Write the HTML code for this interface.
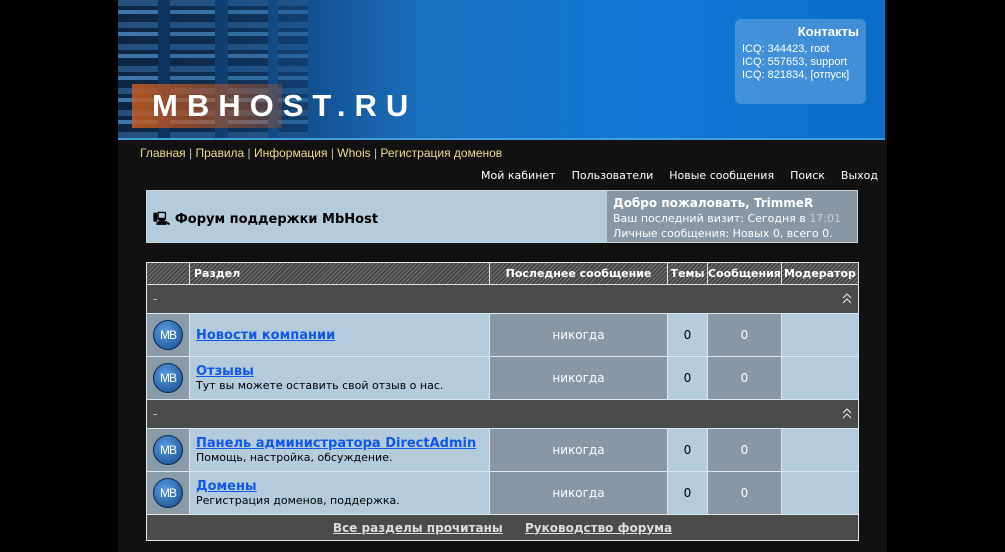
<!DOCTYPE html>
<html><head><meta charset="utf-8"><style>
*{margin:0;padding:0;box-sizing:border-box}
body{width:1005px;height:552px;background:#000;font-family:"DejaVu Sans","Liberation Sans",sans-serif;overflow:hidden;position:relative}
.wrap{position:absolute;left:118px;top:0;width:769px;height:552px;background:#111}
.hdr{position:absolute;left:0;top:0;width:767px;height:140px;background:linear-gradient(90deg,#0b2a50 0%,#14518f 25%,#1a6fc0 40%,#0f7ad6 70%,#0a6dc8 100%);border-bottom:2px solid #3e9ee0;overflow:hidden}
.rack{position:absolute;top:0;height:140px;background:repeating-linear-gradient(180deg,#2a5a8a 0 6px,#0d2540 6px 10px,#4a86bb 10px 14px,#0d2540 14px 22px)}
.logo{position:absolute;left:14px;top:84px;width:150px;height:44px;background:linear-gradient(90deg,rgba(200,90,30,.85),rgba(200,90,30,.3))}
.logotxt{position:absolute;left:34px;top:88px;font-family:"Liberation Sans",sans-serif;font-weight:bold;color:#fff;font-size:31px;letter-spacing:9px}
.cont{position:absolute;left:617px;top:19px;width:131px;height:85px;background:rgba(110,170,225,.55);border-radius:6px;color:#fff;font-family:"Liberation Sans",sans-serif;font-size:11px;padding:6px 7px;line-height:13px}
.cont b{display:block;text-align:right;font-size:13px;margin-bottom:5px}
.nav1{position:absolute;left:22px;top:146px;font-family:"Liberation Sans",sans-serif;font-size:12px;color:#f0d890}
.nav1 span{color:#bbb}
.nav2{position:absolute;right:9px;top:169px;font-family:"DejaVu Sans",sans-serif;font-size:11px;color:#fff}
.nav2 i{font-style:normal;margin-left:16px}
.box{position:absolute;left:28px;top:190px;width:712px;height:53px;border:1px solid #ccd6de;background:#b3cbdb}
.box .t{position:absolute;left:6px;top:19px;font-size:13px;font-weight:bold;color:#000}
.box .r{position:absolute;left:460px;top:0;right:0;bottom:0;background:#8797a4;color:#fff;font-size:11px;padding:5px 6px;line-height:15px}
.box .r b{font-size:12px}
table{position:absolute;left:28px;top:262px;width:713px;border-collapse:collapse;border:1px solid #ccd6de}
td,th{border:1px solid #dde6ec;font-size:12px}
th{height:22px;color:#fff;font-size:11px;background:repeating-linear-gradient(135deg,#777 0 1px,#444 1px 3px);text-align:center}
.cat td{background:#4a4b4b;color:#ccc;height:29px;padding-left:6px;position:relative}
.car{position:absolute;right:6px;top:8px}
.row td{height:43px}
.ic{width:43px;background:#8a9aa6;text-align:center}
.mb{display:inline-block;width:30px;height:30px;border-radius:50%;background:radial-gradient(circle at 40% 35%,#5a9be0,#134a8c);border:1px solid #0a2a55;color:#fff;font-size:12px;line-height:28px;font-family:"Liberation Sans",sans-serif;letter-spacing:-1px}
.nm{background:#b3cbdb;padding-left:6px;color:#000;font-size:11px}
.nm a{color:#1158e6;font-weight:bold;font-size:13px;text-decoration:underline;display:block}
.ls{background:#8797a4;color:#fff;text-align:center;font-size:12px}
.tc{background:#b3cbdb;text-align:center}
.pc{background:#8797a4;color:#fff;text-align:center}
.ft td{background:#4a4b4b;height:26px;text-align:center;color:#ddd;font-weight:bold;font-size:12px}
.ft a{color:#ddd;text-decoration:underline;margin:0 9px}
</style></head><body>
<div class="wrap">
<div class="hdr">
<div class="rack" style="left:0;width:40px;opacity:.8"></div>
<div class="rack" style="left:52px;width:45px;opacity:.7"></div>
<div class="rack" style="left:110px;width:40px;opacity:.6"></div>
<div class="rack" style="left:160px;width:30px;opacity:.4"></div>
<div class="logo"></div>
<div class="logotxt">MBHOST.RU</div>
<div class="cont"><b>Контакты</b>ICQ: 344423, root<br>ICQ: 557653, support<br>ICQ: 821834, [отпуск]</div>
</div>
<div class="nav1">Главная <span>|</span> Правила <span>|</span> Информация <span>|</span> Whois <span>|</span> Регистрация доменов</div>
<div class="nav2">Мой кабинет<i>Пользователи</i><i>Новые сообщения</i><i>Поиск</i><i>Выход</i></div>
<div class="box"><div class="t">🖳 Форум поддержки MbHost</div>
<div class="r"><b>Добро пожаловать, TrimmeR</b><br>Ваш последний визит: Сегодня в <span style="color:#ccc">17:01</span><br>Личные сообщения: Новых 0, всего 0.</div></div>
<table>
<tr><th style="width:43px"></th><th style="text-align:left;padding-left:4px;width:300px">Раздел</th><th style="width:178px">Последнее сообщение</th><th style="width:40px">Темы</th><th style="width:72px">Сообщения</th><th>Модератор</th></tr>
<tr class="cat"><td colspan="6">-<svg class="car" width="10" height="12" viewBox="0 0 10 12"><path d="M1 5L5 1L9 5M1 10L5 6L9 10" fill="none" stroke="#eee" stroke-width="1"/></svg></td></tr>
<tr class="row"><td class="ic"><span class="mb">MB</span></td><td class="nm"><a>Новости компании</a></td><td class="ls">никогда</td><td class="tc">0</td><td class="pc">0</td><td class="tc"></td></tr>
<tr class="row"><td class="ic"><span class="mb">MB</span></td><td class="nm"><a>Отзывы</a>Тут вы можете оставить свой отзыв о нас.</td><td class="ls">никогда</td><td class="tc">0</td><td class="pc">0</td><td class="tc"></td></tr>
<tr class="cat"><td colspan="6">-<svg class="car" width="10" height="12" viewBox="0 0 10 12"><path d="M1 5L5 1L9 5M1 10L5 6L9 10" fill="none" stroke="#eee" stroke-width="1"/></svg></td></tr>
<tr class="row"><td class="ic"><span class="mb">MB</span></td><td class="nm"><a>Панель администратора DirectAdmin</a>Помощь, настройка, обсуждение.</td><td class="ls">никогда</td><td class="tc">0</td><td class="pc">0</td><td class="tc"></td></tr>
<tr class="row"><td class="ic"><span class="mb">MB</span></td><td class="nm"><a>Домены</a>Регистрация доменов, поддержка.</td><td class="ls">никогда</td><td class="tc">0</td><td class="pc">0</td><td class="tc"></td></tr>
<tr class="ft"><td colspan="6"><a>Все разделы прочитаны</a> <a>Руководство форума</a></td></tr>
</table>
</div>
</body></html>
